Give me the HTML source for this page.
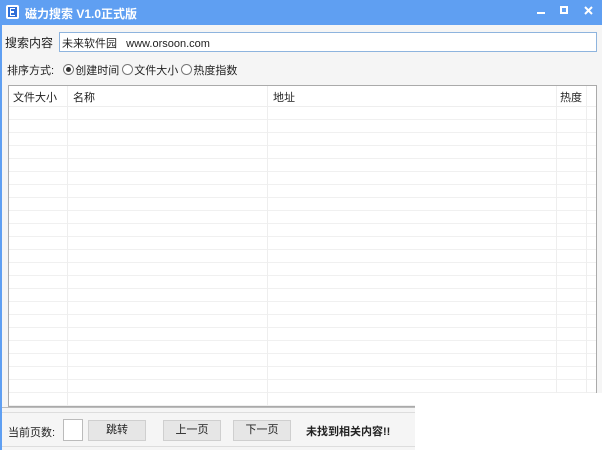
<!DOCTYPE html>
<html><head><meta charset="utf-8"><style>
*{margin:0;padding:0;box-sizing:border-box}
body{width:602px;height:450px;position:relative;background:#fff;font-family:"Liberation Sans","Noto Sans CJK SC",sans-serif;font-size:11px;color:#222;overflow:hidden}
.win{position:absolute;left:0;top:0;width:602px;height:450px;background:#f5f5f5}
.title{position:absolute;left:0;top:0;width:602px;height:25px;background:#5f9ff2;color:#fff;font-weight:bold;font-size:12px}
.title .ic{position:absolute;left:6px;top:5px;width:13px;height:14px;background:#fff;border-radius:2px}
.title .ic:after{content:"";position:absolute;left:2px;top:2px;width:9px;height:10px;background:#2f6fd8}
.title .ic i{position:absolute;left:4px;top:3px;width:5px;height:8px;border:1.5px solid #fff;border-right:none;z-index:1}
.title .ic i:after{content:"";position:absolute;left:0;top:2px;width:3px;height:1.5px;background:#fff}
.title .t{position:absolute;left:25px;top:5px}
.abs{position:absolute;white-space:nowrap}
.inp{position:absolute;left:59px;top:32px;width:538px;height:20px;background:#fff;border:1px solid #8eb4de}
.radio{display:inline-block;width:11px;height:11px;border:1px solid #777;border-radius:50%;vertical-align:-1px;margin-right:1px;background:#fff;position:relative}
.radio.on:after{content:"";position:absolute;left:2px;top:2px;width:5px;height:5px;border-radius:50%;background:#333}
.tbl{position:absolute;left:8px;top:85px;width:589px;height:322px;border:1px solid #aaa;background:#fff;
background-image:repeating-linear-gradient(to bottom,transparent 0,transparent 12px,#f0f0f0 12px,#f0f0f0 13px);background-position:0 21px;background-repeat:repeat}
.hdr{position:absolute;left:0;top:0;width:100%;height:21px;background:#fff;border-bottom:1px solid #eee}
.col{position:absolute;top:0;bottom:0;width:1px;background:#eee}
.btn{position:absolute;top:420px;height:21px;background:#e6e6e6;border:1px solid #cfcfcf;text-align:center;line-height:19px;font-size:11px}
</style></head><body>
<div class="win">
<div class="title"><div class="ic"><i></i></div><div class="t">磁力搜索 V1.0正式版</div>
<div class="abs" style="left:537px;top:12px;width:8px;height:2px;background:#fff"></div>
<div class="abs" style="left:560px;top:6px;width:8px;height:8px;border:2px solid #fff"></div>
<svg class="abs" style="left:584px;top:6px" width="9" height="9"><path d="M1 1L8 8M8 1L1 8" stroke="#fff" stroke-width="2"/></svg>
</div>
<div class="abs" style="left:5px;top:34px;font-size:12px">搜索内容</div>
<div class="inp"><span class="abs" style="left:2px;top:2px;font-size:11px">未来软件园&nbsp;&nbsp;&nbsp;www.orsoon.com</span></div>
<div class="abs" style="left:7px;top:62px">排序方式:&nbsp;&nbsp;&nbsp;<span class="radio on"></span>创建时间 <span class="radio"></span>文件大小 <span class="radio"></span>热度指数</div>
<div class="tbl">
<div class="hdr"></div>
<div class="col" style="left:58px"></div><div class="col" style="left:258px"></div><div class="col" style="left:547px"></div><div class="col" style="left:577px"></div>
<span class="abs" style="left:4px;top:3px">文件大小</span>
<span class="abs" style="left:64px;top:3px">名称</span>
<span class="abs" style="left:264px;top:3px">地址</span>
<span class="abs" style="left:551px;top:3px">热度</span>
</div>
<div class="abs" style="left:415px;top:393px;width:187px;height:57px;background:#fff"></div>
<div class="abs" style="left:0;top:407px;width:415px;height:1px;background:#bbb"></div>
<div class="abs" style="left:0;top:412px;width:415px;height:35px;border-top:1px solid #ddd;border-bottom:1px solid #ddd;background:#f5f5f5"></div>
<div class="abs" style="left:0;top:25px;width:2px;height:425px;background:#5f9ff2"></div>
<div class="abs" style="left:8px;top:424px">当前页数:</div>
<div class="abs" style="left:63px;top:419px;width:20px;height:22px;background:#fff;border:1px solid #bbb"></div>
<div class="btn" style="left:88px;width:58px">跳转</div>
<div class="btn" style="left:163px;width:58px">上一页</div>
<div class="btn" style="left:233px;width:58px">下一页</div>
<div class="abs" style="left:306px;top:423px;font-weight:bold;font-size:11px">未找到相关内容!!</div>
</div>
</body></html>
